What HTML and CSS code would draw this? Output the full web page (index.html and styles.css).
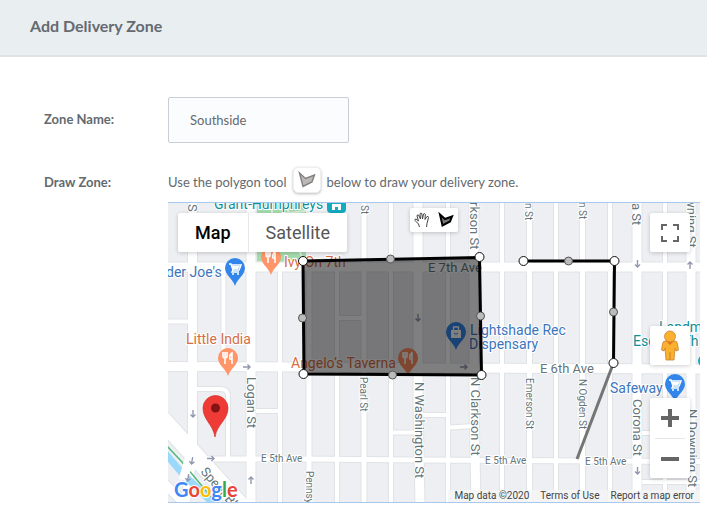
FILE: index.html
```html
<!DOCTYPE html>
<html lang="en">
<head>
<meta charset="utf-8">
<title>Add Delivery Zone</title>
<link rel="stylesheet" href="styles.css">
</head>
<body>
<header class="page-header"><h1>Add Delivery Zone</h1></header>
<main class="form">
  <label class="form-label name-label" for="zone-name">Zone Name:</label>
  <input class="text-input" id="zone-name" type="text" value="Southside">
  <span class="form-label draw-label" id="draw-label">Draw Zone:</span>
  <section class="draw" aria-labelledby="draw-label">
    <p class="hint">
      <span>Use the polygon tool</span>
      <span class="hint-icon"><svg width="18" height="18" viewBox="0 0 18 18"><path d="M1.500 2L7.500 7.500L16.500 4L14 11L5 15.500Z" fill="#bdb8b8" stroke="#858080" stroke-width="1.400"/></svg></span>
      <span>below to draw your delivery zone.</span>
    </p>
    <div class="map">
      <svg class="map-canvas" viewBox="168 203 532 299" preserveAspectRatio="xMinYMin slice">
        <defs>
          <g id="streets">
            <path class="w9" d="M192.500 200V455L185 505M251 200V505M418 200V400L420 505M474 200V400L476 505M637 200V505M691 200V505"/>
            <path class="w5" d="M309 270V505M364 200V505M529.500 200V505M582.500 200V505"/>
            <path class="w4" d="M223.500 270V365M228 460V396Q228 389 220 389H196M280 268V505M337 268V505M391 200V505M448 200V505M502 200V505M556 200V505M610 200V505M665 200V505M168 321.500H190M339 318H364M256 411H280M422 415H448M393 432.500H418M450 427.500L474 426M642 433H665M642 482H700"/>
            <path class="w9" d="M160 267H710M160 366.500L300 367L430 368L710 369"/>
            <path class="w5" d="M192 459H300L420 460L710 461.500"/>
            <path class="w16" d="M157 414L247 513"/>
            <path class="w9" d="M160 479L195 514"/>
          </g>
          <g id="food"><path d="M0 14C-2 7-10 3-10-4A10 10 0 0 1 10-4C10 3 2 7 0 14Z"/><path d="M-5-10V-6Q-5-4-3-4V2M-3-10V-5M-1-10V-6Q-1-4-3-4M4 2V-9Q1-7 2-3H4" fill="none" stroke="#fff" stroke-width="1.600"/></g>
          <g id="cart"><path d="M0 14C-2 7-10 3-10-4A10 10 0 0 1 10-4C10 3 2 7 0 14Z" fill="#3285ea"/><path d="M-6-8H-4L-2-2H4L6-7H-4M-2-2L-3 0H4" fill="none" stroke="#fff" stroke-width="1.500"/><path d="M-3-6H5L3-3H-2Z" fill="#fff"/><circle cx="-2" cy="2" r="1" fill="#fff"/><circle cx="3" cy="2" r="1" fill="#fff"/></g>
          <path id="arrow" d="M-4 0H3M.5-2.500L3 0L.5 2.500" fill="none" stroke="#9298b0" stroke-width="1.400"/>
        </defs>
        <rect x="160" y="200" width="550" height="310" fill="#eeeff2"/>
        <path d="M257 200H306V268H257Z" fill="#a5dcae"/>
        <path d="M257 262H278V235M285 200L303 262M272 200V215L306 211" stroke="#d9eddc" stroke-width="2" fill="none"/>
        <use href="#streets" class="casing"/>
        <use href="#streets" class="road"/>
        <path d="M165 453L182 473L220 510" stroke="#9bd9fb" stroke-width="7" fill="none"/>
        <path d="M165 444L182 462L222 510" stroke="#55b97d" stroke-width="1.500" fill="none"/>
        <path d="M191 453L183 480" stroke="#fff" stroke-width="9"/>
        <use href="#arrow" transform="translate(247 367)"/>
        <use href="#arrow" transform="translate(211 458.500)"/>
        <use href="#arrow" transform="translate(464 367)"/>
        <use href="#arrow" transform="translate(193 414) rotate(90)"/>
        <use href="#arrow" transform="translate(192 461) rotate(100)"/>
        <use href="#arrow" transform="translate(188 478) rotate(100)"/>
        <use href="#arrow" transform="translate(251 480) rotate(-90)"/>
        <use href="#arrow" transform="translate(418 318) rotate(90)"/>
        <use href="#arrow" transform="translate(637.500 264) rotate(90)"/>
        <use href="#arrow" transform="translate(690 265) rotate(-90)"/>
        <use href="#arrow" transform="translate(637.500 471) rotate(90)"/>

        <g class="street big">
          <text transform="translate(188 204) rotate(90)">S</text>
          <text transform="translate(247 377) rotate(90)">Logan St</text>
          <text transform="translate(415 382) rotate(90)">N Washington St</text>
          <text transform="translate(470 202) rotate(90)">rkson St</text>
          <text transform="translate(471 377) rotate(90)">N Clarkson St</text>
          <text transform="translate(632 203) rotate(90)">a St</text>
          <text transform="translate(633 399) rotate(90)">Corona St</text>
          <text transform="translate(687 198) rotate(90)">wning St</text>
          <text transform="translate(688 409) rotate(90)">N Downing St</text>
          <text transform="translate(200 472) rotate(49)">Speer Bl</text>
          <text x="428" y="272">E 7th Ave</text>
          <text x="540" y="373">E 6th Ave</text>
        </g>
        <g class="street small">
          <text transform="translate(361 205) rotate(90)">St</text>
          <text transform="translate(360 377) rotate(90)">Pearl St</text>
          <text transform="translate(525 203) rotate(90)">n St</text>
          <text transform="translate(526 378) rotate(90)">Emerson St</text>
          <text transform="translate(579 202) rotate(90)">n St</text>
          <text transform="translate(579 379) rotate(90)">N Ogden St</text>
          <text transform="translate(306 471) rotate(90)">Pennsy</text>
          <text x="261" y="462">E 5th Ave</text>
          <text x="485" y="464">E 5th Ave</text>
          <text x="585" y="465">E 5th Ave</text>
        </g>
        <g class="place">
          <g class="teal">
            <text x="214" y="209">Grant-Humphreys</text>
            <text x="659" y="332">Landm</text>
            <text x="633" y="346">Esquire Th</text>
            <path d="M327 203H346V209Q346 213 342 213H331Q327 213 327 209Z" fill="#12abc0" stroke="none"/>
            <path d="M332 210V204H341V210H338V207H335V210Z" fill="#fff" stroke="none"/>
            <circle cx="704" cy="361" r="6" fill="#12abc0" stroke="none"/>
          </g>
          <g class="blue">
            <text x="166" y="277">der Joe's</text>
            <text x="470" y="335">Lightshade Rec</text>
            <text x="469" y="349">Dispensary</text>
            <text x="610" y="393">Safeway</text>
          </g>
          <g class="orange">
            <text x="284" y="267">Ivy On 7th</text>
            <text x="186" y="344">Little India</text>
            <text x="291" y="368">Angelo’s Taverna</text>
          </g>
        </g>
        <use href="#food" x="271" y="261" fill="#ff9568"/>
        <use href="#food" x="228" y="362" fill="#ff9568"/>
        <use href="#food" x="408" y="362" fill="#ff8c61"/>
        <use href="#cart" x="235" y="272"/>
        <use href="#cart" x="675" y="388"/>
        <g transform="translate(456 336)"><path d="M0 14C-2 7-10 3-10-4A10 10 0 0 1 10-4C10 3 2 7 0 14Z" fill="#3285ea"/><path d="M-5-6H5V2H-5Z" fill="#fff"/><path d="M-2.500-6V-9H2.500V-6" fill="none" stroke="#fff" stroke-width="1.300"/><path d="M-2-3Q0 0 2-3" fill="none" stroke="#3285ea" stroke-width="1"/></g>

        <path d="M215 437C213 424 203 420 203 408A12.500 12.500 0 0 1 228 408C228 420 217 424 215 437Z" fill="#ee3b35" stroke="#cf302c" stroke-width=".7"/>
        <circle cx="215.500" cy="408" r="4.500" fill="#831315"/>

        <path d="M303 261L479.500 257.500L481.500 375L304 374Z" fill="#000" fill-opacity=".5" stroke="#000" stroke-width="3"/>
        <path d="M523 261H614.500L613.500 363" fill="none" stroke="#000" stroke-width="3"/>
        <path d="M613.500 363L577 459" stroke="#757575" stroke-width="3"/>
        <g class="handle"><circle cx="303" cy="261" r="4.500"/><circle cx="479.500" cy="257" r="4.500"/><circle cx="481.500" cy="375" r="4.500"/><circle cx="303.500" cy="374" r="4.500"/><circle cx="523.500" cy="261" r="4.500"/><circle cx="614.500" cy="261" r="4.500"/><circle cx="613.500" cy="363" r="4.500"/></g>
        <g class="handle mid"><circle cx="390.500" cy="259" r="4"/><circle cx="480.500" cy="316" r="4"/><circle cx="392.500" cy="375" r="4"/><circle cx="302.500" cy="318" r="4"/><circle cx="568.500" cy="261" r="4"/><circle cx="613.500" cy="312" r="4"/></g>
      </svg>

      <div class="control map-types"><button class="active" type="button">Map</button><button type="button">Satellite</button></div>
      <div class="control draw-tools">
        <button type="button" aria-label="Stop drawing"><svg width="16" height="16" viewBox="0 0 16 16"><path d="M5.500 15L4.500 12L1 8.500Q.5 7 2 7L4.500 9L3 4Q3 2.500 4.500 3L6.500 7L6 2Q6.500.5 7.800 1.500L8.500 7L9.500 2Q10.500 1 11.300 2.300L11 7.500L13 4.500Q14.500 4 14.500 5.500L13 11.500L12.500 15" fill="#fff" stroke="#444" stroke-width="1"/></svg></button>
        <button type="button" aria-label="Draw a shape"><svg width="16" height="16" viewBox="0 0 16 16"><path d="M2 2.500L7 7L14 4.500L12 9.500L4.500 13.500Z" fill="#777" stroke="#000" stroke-width="2"/></svg></button>
      </div>
      <button class="control fullscreen" type="button" aria-label="Toggle fullscreen view"><svg width="18" height="18" viewBox="0 0 18 18"><path d="M1 6V1H6M12 1H17V6M17 12V17H12M6 17H1V12" fill="none" stroke="#666" stroke-width="2"/></svg></button>
      <button class="control pegman" type="button" aria-label="Street View"><svg width="20" height="32" viewBox="0 0 20 32"><path d="M5 11H15Q17 11 17.500 14L18.500 20L16 21L15 18L14 30H6L5 18L4 21L1.500 20L2.500 14Q3 11 5 11Z" fill="#fbb12f" stroke="#c98330" stroke-width=".8"/><path d="M6 11L10 15L14 11Z" fill="#e87029"/><path d="M10 22V30" stroke="#c98330" stroke-width="1"/><circle cx="10" cy="6.500" r="5.500" fill="#fbb12f" stroke="#c98330" stroke-width=".8"/></svg></button>
      <div class="control zoom">
        <button type="button" aria-label="Zoom in"><svg width="18" height="18" viewBox="0 0 18 18"><path d="M0 9H18M9 0V18" stroke="#666" stroke-width="4"/></svg></button>
        <button type="button" aria-label="Zoom out"><svg width="18" height="18" viewBox="0 0 18 18"><path d="M0 9H18" stroke="#666" stroke-width="4"/></svg></button>
      </div>
      <a class="google" href="#"><span class="g-blue">G</span><span class="g-red">o</span><span class="g-yellow">o</span><span class="g-blue">g</span><span class="g-green">l</span><span class="g-red">e</span></a>
      <div class="attribution"><span>Map data ©2020</span><a href="#">Terms of Use</a><a href="#">Report a map error</a></div>
    </div>
  </section>
</main>
</body>
</html>
```
FILE: styles.css
```css
* { box-sizing: border-box; }
body { margin: 0; background: #fff; color: #636a70; font: 13px/20px Lato, "Open Sans", sans-serif; }
.page-header { height: 57px; padding: 16px 30px; background: #e9eef1; border-bottom: 2px solid #dfe3e5; }
h1 { margin: 0; font-size: 16px; line-height: 20px; font-weight: 700; color: #656a70; }
.form { display: grid; grid-template-columns: 124px minmax(0, 1fr); row-gap: 24px; padding: 40px 7px 5px 44px; }
.form-label { font-weight: 700; color: #636a70; }
.name-label { padding-top: 12px; }
.draw-label { padding-top: 5px; }
.text-input { width: 181px; height: 46px; padding: 0 21px; border: 1px solid #c9ced6; border-radius: 2px; background: #fbfcfe; color: #656a70; font: inherit; }
.hint { display: flex; gap: 6px; height: 35px; margin: 0; padding-top: 5px; }
.hint-icon { display: grid; place-items: center; width: 28px; height: 26px; margin-top: -5px; border: 1px solid #eee; border-radius: 5px; background: #fff; box-shadow: 0 1px 3px #0004; }
.map { position: relative; height: 301px; overflow: hidden; border: solid #a9c8ee; border-width: 1px 0; font-family: Roboto, sans-serif; }
.map-canvas { display: block; width: 100%; height: 100%; }
.casing { --edge: 2px; stroke: #dfe3e6; fill: none; }
.road { --edge: 0px; stroke: #fff; fill: none; }
.w4 { stroke-width: calc(4px + var(--edge)); }
.w5 { stroke-width: calc(5px + var(--edge)); }
.w9 { stroke-width: calc(9px + var(--edge)); }
.w16 { stroke-width: calc(18px + var(--edge)); }
.street { fill: #65757a; stroke: #fff; stroke-width: 2px; paint-order: stroke; }
.street.big { font-size: 13px; }
.street.small { font-size: 10px; }
.place { font-size: 14px; stroke: #fff; stroke-width: 2px; }
.place text { paint-order: stroke; }
.teal { fill: #12909a; }
.blue { fill: #3d75bd; }
.orange { fill: #d66d43; }
.handle { fill: #fff; stroke: #111; stroke-width: 1px; }
.handle.mid { fill: #bbb; stroke: #555; }
.control { position: absolute; background: #fff; border: 0; border-radius: 2px; box-shadow: 0 1px 4px #0003; }
.control button { border: 0; background: none; padding: 0; font-family: inherit; }
.control, .control button { display: flex; align-items: center; justify-content: center; }
.map-types { left: 10px; top: 10px; height: 39px; }
.map-types button { height: 39px; padding: 0 17px; color: #565656; font-size: 18px; }
.map-types .active { color: #000; font-weight: 500; border-right: 1px solid #e8e8e8; }
.draw-tools { left: 242px; top: 5px; }
.draw-tools button { width: 24px; height: 24px; }
.control.fullscreen, .control.pegman { right: 10px; width: 40px; height: 39px; padding: 0; }
.fullscreen { top: 10px; }
.pegman { top: 123px; }
.control.zoom { right: 10px; top: 195px; width: 40px; flex-direction: column; }
.zoom button { width: 30px; height: 40px; }
.zoom button + button { border-top: 1px solid #e6e6e6; }
.google { position: absolute; left: 6px; bottom: 0; font: 700 20px/26px Lato, sans-serif; text-decoration: none; text-shadow: 0 0 1px #fff, 1px 0 1px #fff, -1px 0 1px #fff, 0 1px 1px #fff, 0 -1px 1px #fff; }
.g-blue { color: #4285f4; }
.g-red { color: #ea4335; }
.g-yellow { color: #fbbc05; }
.g-green { color: #34a853; }
.attribution { position: absolute; right: 0; bottom: 0; display: flex; gap: 11px; padding: 0 6px; background: #f5f5f5cc; color: #444; font-size: 10px; line-height: 12px; }
.attribution a { color: inherit; text-decoration: none; }
```
